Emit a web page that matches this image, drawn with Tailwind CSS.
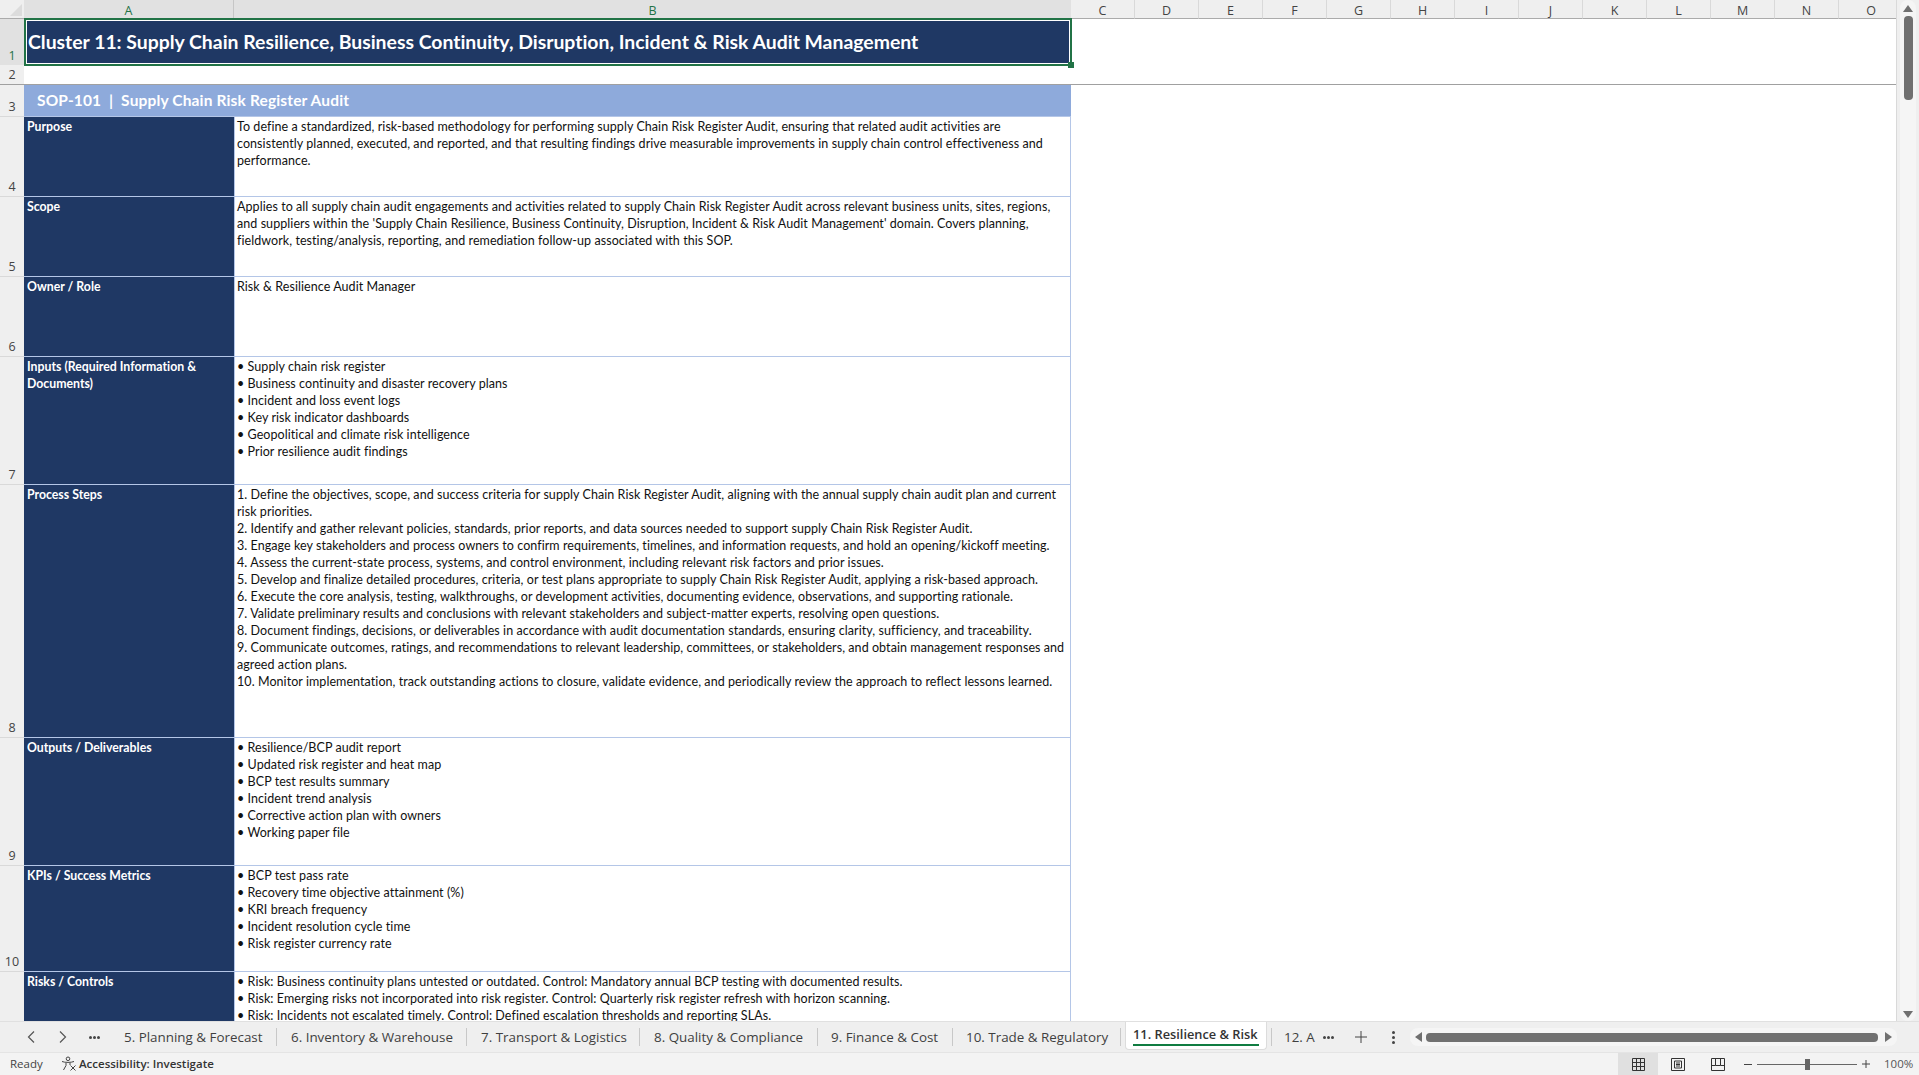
<!DOCTYPE html>
<html lang="en">
<head>
<meta charset="utf-8">
<title>Cluster 11</title>
<script src="https://cdn.jsdelivr.net/npm/@tailwindcss/browser@4"></script>
</head>
<body class="m-0 bg-white">
<div class="w-[1919px] h-[1075px] flex flex-col overflow-hidden font-['Lato',sans-serif] text-[#111] [font-variant-ligatures:none]">

  <!-- sheet + vertical scrollbar -->
  <div class="flex h-[1021px]">
    <div class="relative w-[1897px] overflow-hidden border-r border-[#d9d9d9] bg-white">

      <!-- column headers -->
      <div class="flex h-[19px] font-['Open_Sans',sans-serif] text-[12.5px] leading-[21px] text-[#444] text-center">
        <div class="w-[24px] shrink-0 bg-[#efefef] border-b border-[#ababab] relative">
          <div class="absolute right-[2px] bottom-[2px] w-0 h-0 border-l-[12px] border-l-transparent border-b-[12px] border-b-[#dcdcdc]"></div>
        </div>
        <div class="w-[210px] shrink-0 bg-[#e1e1e1] border-r border-[#c6c6c6] text-[#1f7246]">A</div>
        <div class="w-[837px] shrink-0 bg-[#e1e1e1] text-[#1f7246]">B</div>
        <div class="w-[64px] shrink-0 bg-[#efefef] border-r border-b border-[#d9d9d9] border-b-[#ababab]">C</div>
        <div class="w-[64px] shrink-0 bg-[#efefef] border-r border-b border-[#d9d9d9] border-b-[#ababab]">D</div>
        <div class="w-[64px] shrink-0 bg-[#efefef] border-r border-b border-[#d9d9d9] border-b-[#ababab]">E</div>
        <div class="w-[64px] shrink-0 bg-[#efefef] border-r border-b border-[#d9d9d9] border-b-[#ababab]">F</div>
        <div class="w-[64px] shrink-0 bg-[#efefef] border-r border-b border-[#d9d9d9] border-b-[#ababab]">G</div>
        <div class="w-[64px] shrink-0 bg-[#efefef] border-r border-b border-[#d9d9d9] border-b-[#ababab]">H</div>
        <div class="w-[64px] shrink-0 bg-[#efefef] border-r border-b border-[#d9d9d9] border-b-[#ababab]">I</div>
        <div class="w-[64px] shrink-0 bg-[#efefef] border-r border-b border-[#d9d9d9] border-b-[#ababab]">J</div>
        <div class="w-[64px] shrink-0 bg-[#efefef] border-r border-b border-[#d9d9d9] border-b-[#ababab]">K</div>
        <div class="w-[64px] shrink-0 bg-[#efefef] border-r border-b border-[#d9d9d9] border-b-[#ababab]">L</div>
        <div class="w-[64px] shrink-0 bg-[#efefef] border-r border-b border-[#d9d9d9] border-b-[#ababab]">M</div>
        <div class="w-[64px] shrink-0 bg-[#efefef] border-r border-b border-[#d9d9d9] border-b-[#ababab]">N</div>
        <div class="w-[64px] shrink-0 bg-[#efefef] border-b border-[#ababab]">O</div>
      </div>

      <!-- row 1 -->
      <div class="flex h-[46px]">
        <div class="w-[24px] bg-[#e1e1e1] flex items-end justify-center font-['Open_Sans',sans-serif] text-[12.5px] leading-[18px] text-[#1f7246]">1</div>
        <div class="w-[1047px] bg-[#1f3864] pl-[4px] flex items-center font-bold text-[19.4px] text-white whitespace-nowrap">Cluster 11: Supply Chain Resilience, Business Continuity, Disruption, Incident &amp; Risk Audit Management</div>
      </div>
      <!-- row 2, frozen pane line under it -->
      <div class="flex h-[20px] border-b border-[#a0a0a0]">
        <div class="w-[24px] bg-[#efefef] flex items-end justify-center font-['Open_Sans',sans-serif] text-[12.5px] leading-[18px] text-[#444]">2</div>
      </div>
      <!-- row 3 -->
      <div class="flex h-[32px]">
        <div class="w-[24px] bg-[#efefef] border-b border-[#d9d9d9] flex items-end justify-center font-['Open_Sans',sans-serif] text-[12.5px] leading-[18px] text-[#444]">3</div>
        <div class="w-[1047px] bg-[#8eaadb] border-b border-[#b4c6e7] pl-[13px] flex items-center font-bold text-[15.5px] tracking-[0.15px] text-white whitespace-pre">SOP-101  |  Supply Chain Risk Register Audit</div>
      </div>

      <!-- row 4 -->
      <div class="flex h-[80px]">
        <div class="w-[24px] bg-[#efefef] border-b border-[#d9d9d9] flex items-end justify-center font-['Open_Sans',sans-serif] text-[12.5px] leading-[18px] text-[#444]">4</div>
        <div class="w-[211px] bg-[#1f3864] border-b border-r border-[#b4c6e7] pl-[3px] pt-[1px] font-bold text-[12.3px] leading-[17px] text-white">Purpose</div>
        <div class="w-[836px] border-b border-r border-[#b4c6e7] pl-[2px] pt-[1px] text-[12.5px] tracking-[0.065px] leading-[17px] whitespace-nowrap">To define a standardized, risk-based methodology for performing supply Chain Risk Register Audit, ensuring that related audit activities are<br>consistently planned, executed, and reported, and that resulting findings drive measurable improvements in supply chain control effectiveness and<br>performance.</div>
      </div>
      <!-- row 5 -->
      <div class="flex h-[80px]">
        <div class="w-[24px] bg-[#efefef] border-b border-[#d9d9d9] flex items-end justify-center font-['Open_Sans',sans-serif] text-[12.5px] leading-[18px] text-[#444]">5</div>
        <div class="w-[211px] bg-[#1f3864] border-b border-r border-[#b4c6e7] pl-[3px] pt-[1px] font-bold text-[12.3px] leading-[17px] text-white">Scope</div>
        <div class="w-[836px] border-b border-r border-[#b4c6e7] pl-[2px] pt-[1px] text-[12.5px] tracking-[0.065px] leading-[17px] whitespace-nowrap">Applies to all supply chain audit engagements and activities related to supply Chain Risk Register Audit across relevant business units, sites, regions,<br>and suppliers within the 'Supply Chain Resilience, Business Continuity, Disruption, Incident &amp; Risk Audit Management' domain. Covers planning,<br>fieldwork, testing/analysis, reporting, and remediation follow-up associated with this SOP.</div>
      </div>
      <!-- row 6 -->
      <div class="flex h-[80px]">
        <div class="w-[24px] bg-[#efefef] border-b border-[#d9d9d9] flex items-end justify-center font-['Open_Sans',sans-serif] text-[12.5px] leading-[18px] text-[#444]">6</div>
        <div class="w-[211px] bg-[#1f3864] border-b border-r border-[#b4c6e7] pl-[3px] pt-[1px] font-bold text-[12.3px] leading-[17px] text-white">Owner / Role</div>
        <div class="w-[836px] border-b border-r border-[#b4c6e7] pl-[2px] pt-[1px] text-[12.5px] tracking-[0.065px] leading-[17px] whitespace-nowrap">Risk &amp; Resilience Audit Manager</div>
      </div>
      <!-- row 7 -->
      <div class="flex h-[128px]">
        <div class="w-[24px] bg-[#efefef] border-b border-[#d9d9d9] flex items-end justify-center font-['Open_Sans',sans-serif] text-[12.5px] leading-[18px] text-[#444]">7</div>
        <div class="w-[211px] bg-[#1f3864] border-b border-r border-[#b4c6e7] pl-[3px] pt-[1px] font-bold text-[12.3px] leading-[17px] text-white whitespace-nowrap">Inputs (Required Information &amp;<br>Documents)</div>
        <div class="w-[836px] border-b border-r border-[#b4c6e7] pl-[2px] pt-[1px] text-[12.5px] tracking-[0.065px] leading-[17px] whitespace-nowrap">• Supply chain risk register<br>• Business continuity and disaster recovery plans<br>• Incident and loss event logs<br>• Key risk indicator dashboards<br>• Geopolitical and climate risk intelligence<br>• Prior resilience audit findings</div>
      </div>
      <!-- row 8 -->
      <div class="flex h-[253px]">
        <div class="w-[24px] bg-[#efefef] border-b border-[#d9d9d9] flex items-end justify-center font-['Open_Sans',sans-serif] text-[12.5px] leading-[18px] text-[#444]">8</div>
        <div class="w-[211px] bg-[#1f3864] border-b border-r border-[#b4c6e7] pl-[3px] pt-[1px] font-bold text-[12.3px] leading-[17px] text-white">Process Steps</div>
        <div class="w-[836px] border-b border-r border-[#b4c6e7] pl-[2px] pt-[1px] text-[12.5px] tracking-[0.065px] leading-[17px] whitespace-nowrap">1. Define the objectives, scope, and success criteria for supply Chain Risk Register Audit, aligning with the annual supply chain audit plan and current<br>risk priorities.<br>2. Identify and gather relevant policies, standards, prior reports, and data sources needed to support supply Chain Risk Register Audit.<br>3. Engage key stakeholders and process owners to confirm requirements, timelines, and information requests, and hold an opening/kickoff meeting.<br>4. Assess the current-state process, systems, and control environment, including relevant risk factors and prior issues.<br>5. Develop and finalize detailed procedures, criteria, or test plans appropriate to supply Chain Risk Register Audit, applying a risk-based approach.<br>6. Execute the core analysis, testing, walkthroughs, or development activities, documenting evidence, observations, and supporting rationale.<br>7. Validate preliminary results and conclusions with relevant stakeholders and subject-matter experts, resolving open questions.<br>8. Document findings, decisions, or deliverables in accordance with audit documentation standards, ensuring clarity, sufficiency, and traceability.<br>9. Communicate outcomes, ratings, and recommendations to relevant leadership, committees, or stakeholders, and obtain management responses and<br>agreed action plans.<br>10. Monitor implementation, track outstanding actions to closure, validate evidence, and periodically review the approach to reflect lessons learned.</div>
      </div>
      <!-- row 9 -->
      <div class="flex h-[128px]">
        <div class="w-[24px] bg-[#efefef] border-b border-[#d9d9d9] flex items-end justify-center font-['Open_Sans',sans-serif] text-[12.5px] leading-[18px] text-[#444]">9</div>
        <div class="w-[211px] bg-[#1f3864] border-b border-r border-[#b4c6e7] pl-[3px] pt-[1px] font-bold text-[12.3px] leading-[17px] text-white">Outputs / Deliverables</div>
        <div class="w-[836px] border-b border-r border-[#b4c6e7] pl-[2px] pt-[1px] text-[12.5px] tracking-[0.065px] leading-[17px] whitespace-nowrap">• Resilience/BCP audit report<br>• Updated risk register and heat map<br>• BCP test results summary<br>• Incident trend analysis<br>• Corrective action plan with owners<br>• Working paper file</div>
      </div>
      <!-- row 10 -->
      <div class="flex h-[106px]">
        <div class="w-[24px] bg-[#efefef] border-b border-[#d9d9d9] flex items-end justify-center font-['Open_Sans',sans-serif] text-[12.5px] leading-[18px] text-[#444]">10</div>
        <div class="w-[211px] bg-[#1f3864] border-b border-r border-[#b4c6e7] pl-[3px] pt-[1px] font-bold text-[12.3px] leading-[17px] text-white">KPIs / Success Metrics</div>
        <div class="w-[836px] border-b border-r border-[#b4c6e7] pl-[2px] pt-[1px] text-[12.5px] tracking-[0.065px] leading-[17px] whitespace-nowrap">• BCP test pass rate<br>• Recovery time objective attainment (%)<br>• KRI breach frequency<br>• Incident resolution cycle time<br>• Risk register currency rate</div>
      </div>
      <!-- row 11, cut off by the tab bar -->
      <div class="flex h-[56px]">
        <div class="w-[24px] bg-[#efefef]"></div>
        <div class="w-[211px] bg-[#1f3864] border-r border-[#b4c6e7] pl-[3px] pt-[1px] font-bold text-[12.3px] leading-[17px] text-white">Risks / Controls</div>
        <div class="w-[836px] border-r border-[#b4c6e7] pl-[2px] pt-[1px] text-[12.5px] tracking-[0.065px] leading-[17px] whitespace-nowrap">• Risk: Business continuity plans untested or outdated. Control: Mandatory annual BCP testing with documented results.<br>• Risk: Emerging risks not incorporated into risk register. Control: Quarterly risk register refresh with horizon scanning.<br>• Risk: Incidents not escalated timely. Control: Defined escalation thresholds and reporting SLAs.</div>
      </div>

      <!-- selected cell outline -->
      <div class="absolute left-[24px] top-[18px] w-[1048px] h-[48px] border-2 border-[#217346] pointer-events-none">
        <div class="w-full h-full border border-white"></div>
        <div class="absolute right-[-4px] bottom-[-4px] w-[6px] h-[6px] bg-[#217346] border border-[#217346]"></div>
      </div>
    </div>

    <!-- vertical scrollbar -->
    <div class="flex-1 bg-[#efefef] pl-[3px] pr-[3px] flex flex-col items-center">
      <div class="w-full flex-1 bg-[#f5f5f5] rounded-[8px] flex flex-col items-center pt-[5px]">
        <div class="w-0 h-0 border-l-[5px] border-r-[5px] border-b-[7px] border-l-transparent border-r-transparent border-b-[#707070]"></div>
        <div class="w-[9px] h-[84px] mt-[4px] bg-[#707070] rounded-[4px]"></div>
        <div class="mt-auto mb-[3px] w-0 h-0 border-l-[5px] border-r-[5px] border-t-[7px] border-l-transparent border-r-transparent border-t-[#707070]"></div>
      </div>
    </div>
  </div>

  <!-- sheet tabs -->
  <div class="h-[32px] bg-[#efefef] border-t border-[#e0e0e0] border-b border-b-[#e4e4e4] flex items-center font-['Open_Sans',sans-serif] text-[13.4px] text-[#3f3f3f] whitespace-nowrap">
    <div class="w-[124px] flex items-center shrink-0">
      <svg class="ml-[26px] w-[10px] h-[14px]" viewBox="0 0 10 14" fill="none" stroke="#555" stroke-width="1.2"><path d="M8 1.5 2.5 7 8 12.5"/></svg>
      <svg class="ml-[22px] w-[10px] h-[14px]" viewBox="0 0 10 14" fill="none" stroke="#555" stroke-width="1.2"><path d="M2 1.5 7.500 7 2 12.5"/></svg>
      <span class="ml-[21px] flex gap-[1px]"><i class="w-[3px] h-[3px] rounded-full bg-[#444]"></i><i class="w-[3px] h-[3px] rounded-full bg-[#444]"></i><i class="w-[3px] h-[3px] rounded-full bg-[#444]"></i></span>
    </div>
    <div class="w-[152px] shrink-0">5. Planning &amp; Forecast</div>
    <div class="w-px h-[18px] bg-[#c8c8c8] shrink-0"></div>
    <div class="w-[189px] pl-[14px] shrink-0">6. Inventory &amp; Warehouse</div>
    <div class="w-px h-[18px] bg-[#c8c8c8] shrink-0"></div>
    <div class="w-[172px] pl-[14px] shrink-0">7. Transport &amp; Logistics</div>
    <div class="w-px h-[18px] bg-[#c8c8c8] shrink-0"></div>
    <div class="w-[177px] pl-[14px] shrink-0">8. Quality &amp; Compliance</div>
    <div class="w-px h-[18px] bg-[#c8c8c8] shrink-0"></div>
    <div class="w-[134px] pl-[13px] shrink-0">9. Finance &amp; Cost</div>
    <div class="w-px h-[18px] bg-[#c8c8c8] shrink-0"></div>
    <div class="w-[167px] pl-[13px] shrink-0">10. Trade &amp; Regulatory</div>
    <div class="w-px h-[18px] bg-[#c8c8c8] shrink-0"></div>
    <div class="w-[142px] h-[28px] ml-[4px] -mt-[2px] bg-white rounded-b-[4px] border-x border-b border-[#dcdcdc] shrink-0 px-[7px] font-semibold text-[12.8px] text-[#333] leading-[24px]">
      <div class="h-[24px] border-b-2 border-[#107c41]">11. Resilience &amp; Risk</div>
    </div>
    <div class="ml-[4px] w-px h-[18px] bg-[#c8c8c8] shrink-0"></div>
    <div class="w-[30px] ml-[12px] shrink-0">12. A</div>
    <span class="ml-[9px] flex gap-[1px] shrink-0"><i class="w-[3px] h-[3px] rounded-full bg-[#444]"></i><i class="w-[3px] h-[3px] rounded-full bg-[#444]"></i><i class="w-[3px] h-[3px] rounded-full bg-[#444]"></i></span>
    <svg class="ml-[21px] w-[12px] h-[12px] shrink-0" viewBox="0 0 12 12" stroke="#444" stroke-width="1"><path d="M6 0v12M0 6h12"/></svg>
    <span class="ml-[25px] flex flex-col gap-[2px] shrink-0"><i class="w-[3px] h-[3px] rounded-full bg-[#444]"></i><i class="w-[3px] h-[3px] rounded-full bg-[#444]"></i><i class="w-[3px] h-[3px] rounded-full bg-[#444]"></i></span>
    <!-- horizontal scrollbar -->
    <div class="ml-[15px] w-[487px] h-[18px] bg-[#f5f5f5] rounded-[8px] flex items-center pl-[5px] pr-[5px] shrink-0">
      <div class="w-0 h-0 border-t-[5px] border-b-[5px] border-r-[7px] border-t-transparent border-b-transparent border-r-[#707070]"></div>
      <div class="ml-[4px] w-[452px] h-[9px] bg-[#707070] rounded-[4px]"></div>
      <div class="ml-auto w-0 h-0 border-t-[5px] border-b-[5px] border-l-[7px] border-t-transparent border-b-transparent border-l-[#707070]"></div>
    </div>
  </div>

  <!-- status bar -->
  <div class="h-[22px] bg-[#f3f3f3] flex items-center font-['Open_Sans',sans-serif] text-[11.5px] text-[#444] whitespace-nowrap">
    <span class="ml-[10px] w-[51px]">Ready</span>
    <svg class="w-[16px] h-[16px]" viewBox="0 0 16 16" fill="none" stroke="#444" stroke-width="1"><circle cx="7" cy="2.800" r="1.800"/><path d="M1 5.500c3 1.200 9 1.200 12 0M5 7v2.500L2.500 14M9 7v2M9.500 9.500l5 5M14.500 9.500l-5 5"/></svg>
    <span class="ml-[2px] font-semibold text-[#333]">Accessibility: Investigate</span>
    <div class="ml-auto flex items-center h-full">
      <div class="w-[40px] h-full bg-[#e0e0e0] flex items-center justify-center">
        <svg class="w-[13px] h-[13px]" viewBox="0 0 13 13" fill="none" stroke="#333"><path d="M.5.500h12v12H.5zM4.500.500v12M8.500.500v12M.5 4.500h12M.5 8.500h12"/></svg>
      </div>
      <div class="w-[40px] flex items-center justify-center">
        <svg class="w-[14px] h-[13px]" viewBox="0 0 14 13" fill="none" stroke="#333"><path d="M.5.500h13v12H.5zM3.500 3h7v7h-7zM5 5h4M5 6.500h4M5 8h4"/></svg>
      </div>
      <div class="w-[40px] flex items-center justify-center">
        <svg class="w-[14px] h-[13px]" viewBox="0 0 14 13" fill="none" stroke="#333"><path d="M.5.500h13v12H.5zM.5 7.500h4V.5M4.500 7.500h5V.5M9.500 7.500h4"/></svg>
      </div>
      <div class="ml-[6px] w-[8px] h-px bg-[#444]"></div>
      <div class="relative ml-[5px] w-[100px] h-px bg-[#666]">
        <div class="absolute left-[48px] -top-[5px] w-[5px] h-[11px] bg-[#666]"></div>
      </div>
      <svg class="ml-[5px] w-[8px] h-[8px]" viewBox="0 0 8 8" stroke="#444"><path d="M4 0v8M0 4h8"/></svg>
      <span class="ml-[14px] w-[35px] text-[#555]">100%</span>
    </div>
  </div>
</div>
</body>
</html>
